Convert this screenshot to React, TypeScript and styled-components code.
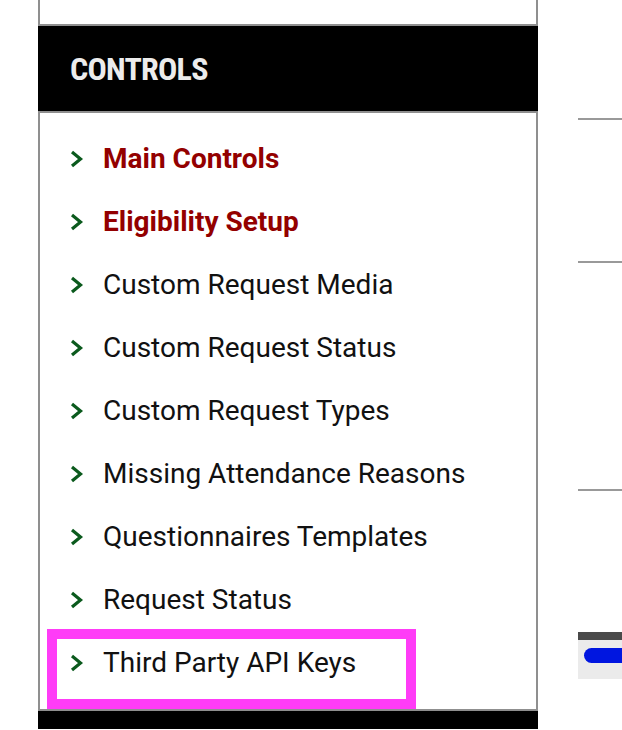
import React from "react";
import styled, { createGlobalStyle } from "styled-components";

const GlobalStyle = createGlobalStyle`
  body {
    margin: 0;
    background: #fff;
    font-family: Roboto, "Liberation Sans", sans-serif;
  }
`;

const Page = styled.div`
  display: flex;
  gap: 40px;
  padding-left: 38px;
  height: 730px;
  overflow: hidden;
`;

const SideColumn = styled.div`
  width: 500px;
  flex-shrink: 0;
  display: flex;
  flex-direction: column;
  & > * {
    flex-shrink: 0;
  }
`;

const PrevBox = styled.div`
  height: 24px;
  border: 2px solid #8f8f8f;
  border-top: none;
`;

const Header = styled.div`
  height: 85px;
  background: #000;
  color: #ececec;
  display: flex;
  align-items: center;
  padding-left: 32px;
  font-family: Roboto, "Liberation Sans", sans-serif;
  font-weight: 700;
  font-size: 32px;
  letter-spacing: -0.75px;
  font-stretch: condensed;
`;

const MenuBox = styled.div`
  border: 2px solid #8f8f8f;
  padding: 14px 0 15px;
  display: flex;
  flex-direction: column;
`;

const MenuItem = styled.div<{ $highlight?: boolean }>`
  height: 63px;
  display: flex;
  align-items: center;
  gap: 19px;
  padding-left: 30px;
  position: relative;
  ${(p) =>
    p.$highlight &&
    `
    &::after {
      content: "";
      position: absolute;
      left: 7px;
      top: -2px;
      width: 369px;
      height: 80px;
      box-sizing: border-box;
      border: 10px solid #ff3cf7;
    }
  `}
`;

const Label = styled.span<{ $bold?: boolean }>`
  font-size: 28px;
  font-weight: ${(p) => (p.$bold ? 700 : 400)};
  color: ${(p) => (p.$bold ? "#930000" : "#111")};
  line-height: 1;
`;

const Chevron = styled.svg`
  width: 14px;
  height: 18px;
  flex-shrink: 0;
`;

const NextHeader = styled.div`
  height: 18px;
  background: #000;
`;

const RightColumn = styled.div`
  flex: 1;
  display: flex;
  flex-direction: column;
  & > * {
    flex-shrink: 0;
  }
`;

const Rule = styled.div<{ $top: number }>`
  height: 2px;
  background: #999;
  margin-top: ${(p) => p.$top}px;
`;

const Widget = styled.div`
  margin-top: 141px;
  border-top: 8px solid #4a4a4a;
  background: #ebebeb;
  height: 47px;
  padding: 8px 0 0 6px;
  box-sizing: border-box;
`;

const BluePill = styled.div`
  height: 15px;
  background: #0016e0;
  border-radius: 8px 0 0 8px;
`;

const items = [
  { label: "Main Controls", bold: true },
  { label: "Eligibility Setup", bold: true },
  { label: "Custom Request Media" },
  { label: "Custom Request Status" },
  { label: "Custom Request Types" },
  { label: "Missing Attendance Reasons" },
  { label: "Questionnaires Templates" },
  { label: "Request Status" },
  { label: "Third Party API Keys", highlight: true },
];

const App: React.FC = () => {
  return (
    <>
      <GlobalStyle />
      <Page>
        <SideColumn>
          <PrevBox />
          <Header>CONTROLS</Header>
          <MenuBox>
            {items.map((item) => (
              <MenuItem key={item.label} $highlight={item.highlight}>
                <Chevron viewBox="0 0 14 18">
                  <polyline
                    points="2,2 10.5,9 2,16"
                    fill="none"
                    stroke="#0b5a1d"
                    strokeWidth="3.2"
                  />
                </Chevron>
                <Label $bold={item.bold}>{item.label}</Label>
              </MenuItem>
            ))}
          </MenuBox>
          <NextHeader />
        </SideColumn>
        <RightColumn>
          <Rule $top={118} />
          <Rule $top={141} />
          <Rule $top={226} />
          <Widget>
            <BluePill />
          </Widget>
        </RightColumn>
      </Page>
    </>
  );
};

export default App;
